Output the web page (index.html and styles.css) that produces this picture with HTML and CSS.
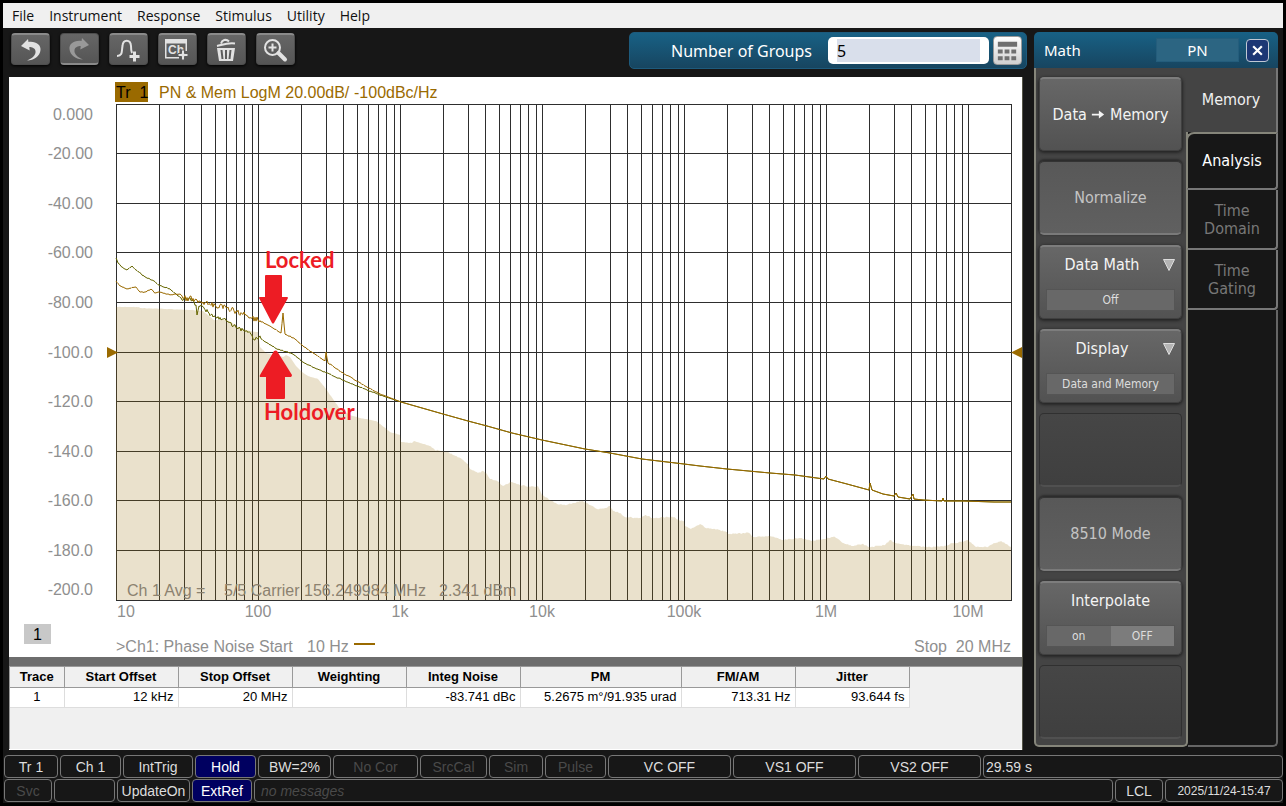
FILE: index.html
```
<!DOCTYPE html>
<html lang="en">
<head>
  <meta charset="UTF-8" />
  <meta name="viewport" content="width=device-width, initial-scale=1.0" />
  <title>Phase Noise</title>
  <link rel="stylesheet" href="styles.css">
</head>
<body>

  <div class="app">
    <nav class="menu-bar">
      <button>File</button>
      <button>Instrument</button>
      <button>Response</button>
      <button>Stimulus</button>
      <button>Utility</button>
      <button>Help</button>
    </nav>

    <div class="workspace">
      <main class="left">
        <div class="top-row">
          <div class="toolbar">
            <button class="tool" aria-label="Undo">
              <svg viewBox="0 0 39 32"><path d="M10 12 L17 5 L17.5 8 C25 7 30 11 29.5 16 C29 22 23 26.5 16 26.5 C22 24 25 21 24.5 17 C24 14 21 13 18.3 13 L18.7 16.5 Z" /></svg>
            </button>
            <button class="tool pressed" aria-label="Redo">
              <svg viewBox="0 0 39 32"><path d="M29 12 L22 5 L21.5 8 C14 7 9 11 9.5 16 C10 22 16 26.5 23 26.5 C17 24 14 21 14.5 17 C15 14 18 13 20.7 13 L20.3 16.5 Z" /></svg>
            </button>
            <button class="tool" aria-label="Add trace">
              <svg viewBox="0 0 39 32">
                <path class="line" d="M8 22 C14 22 12.5 17 13.500 12 C14 5 21.5 5 22 12 C22 15 22 17 23 19" />
                <path d="M24 17.500 h3 v3.500 h3.500 v3 h-3.500 v3.500 h-3 v-3.500 h-3.500 v-3 h3.500 z" />
              </svg>
            </button>
            <button class="tool" aria-label="Add channel">
              <svg viewBox="0 0 39 32">
                <path d="M7 5 h22 v12 h-1.500 v-7.500 h-19 v13.500 h12.500 v1.500 h-14 z" />
                <text class="ch-text" x="10" y="20">Ch</text>
                <path class="outlined" d="M23.500 16 h3 v3.500 h3.500 v3 h-3.500 v3.500 h-3 v-3.500 h-3.500 v-3 h3.500 z" />
              </svg>
            </button>
            <button class="tool" aria-label="Delete">
              <svg viewBox="0 0 39 32">
                <path d="M10 14 h18 l-2 13 h-14 z" />
                <path class="cut" d="M14.500 16 l1 9 M19 16 v9 M23.500 16 l-1 9" />
                <path class="line" d="M10 12 C15 11 20 8.500 28 9.500 M14 9.500 C15 6 19 4.500 22 7.500" />
              </svg>
            </button>
            <button class="tool" aria-label="Zoom">
              <svg viewBox="0 0 39 32">
                <circle class="line" cx="16.500" cy="13.500" r="7.500" />
                <path class="line" d="M16.500 9.500 v8 M12.500 13.500 h8" />
                <path class="handle" d="M22.500 19 L29 25.500" />
              </svg>
            </button>
          </div>

          <div class="entry-bar">
            <label for="groups">Number of Groups</label>
            <input type="text" id="groups" value="5">
            <button class="keypad" aria-label="Keypad">
              <svg viewBox="0 0 28 29">
                <path d="M4 5 h20 v5 h-20 z M4 13 h5 v4 h-5 z M11 13 h5 v4 h-5 z M18 13 h5 v4 h-5 z M4 20 h5 v4 h-5 z M11 20 h5 v4 h-5 z M18 20 h5 v4 h-5 z" />
              </svg>
            </button>
          </div>
        </div>

        <div class="screen">
          <svg class="chart" viewBox="0 0 1013 580">
            <rect x="106" y="5" width="33" height="20" fill="#9a6a00" />
            <text x="107" y="21" class="on-trace">Tr&#160; 1</text>
            <text x="150" y="21" class="trace-label">PN &amp; Mem LogM 20.00dB/</text>
            <text x="345" y="21" class="trace-label">-100dBc/Hz</text>

            <g id="grid"></g>
            <path id="shade" />
            <path id="memory-trace" />
            <path id="data-trace" />
            <path class="marker" d="M98 270 L109 275.500 L98 281 Z M1013 270 L1002 275.500 L1013 281 Z" />

            <g id="y-labels"></g>
            <g id="x-labels"></g>
            <g class="carrier">
              <text x="118" y="519">Ch 1 Avg =</text>
              <text x="215" y="519">5/5 Carrier 156.249984 MHz</text>
              <text x="430" y="519">2.341 dBm</text>
            </g>

            <rect x="15" y="547" width="27" height="20" fill="#c8c8c8" />
            <text x="24" y="563" class="channel">1</text>
            <text x="107" y="575">&gt;Ch1: Phase Noise</text>
            <text x="250" y="575">Start</text>
            <text x="298" y="575">10 Hz</text>
            <rect x="345" y="566" width="21" height="2" fill="#9a6a00" />
            <text x="1002" y="575" text-anchor="end">Stop&#160; 20 MHz</text>

            <g class="note">
              <text x="256" y="191">Locked</text>
              <path d="M256 199 q0 -1 1 -1 h15 q1 0 1 1 v21 h5 q1 0 1 1 l-14 25 q-1 1 -2 0 l-13 -25 q0 -1 1 -1 h5 z" />
              <path d="M257 321 q0 1 1 1 h17 q1 0 1 -1 v-21 h6 q1 -1 1 -2 l-15 -24 q-1 -1 -3 0 l-14 24 q-1 2 1 2 h5 z" />
              <text x="255" y="343">Holdover</text>
            </g>
          </svg>

          <div class="results">
            <table>
              <thead>
                <tr>
                  <th class="narrow">Trace</th>
                  <th>Start Offset</th>
                  <th>Stop Offset</th>
                  <th>Weighting</th>
                  <th>Integ Noise</th>
                  <th class="wide">PM</th>
                  <th>FM/AM</th>
                  <th>Jitter</th>
                </tr>
              </thead>
              <tbody>
                <tr>
                  <td class="center">1</td>
                  <td>12 kHz</td>
                  <td>20 MHz</td>
                  <td></td>
                  <td>-83.741 dBc</td>
                  <td>5.2675 m°/91.935 urad</td>
                  <td>713.31 Hz</td>
                  <td>93.644 fs</td>
                </tr>
              </tbody>
            </table>
          </div>
        </div>
      </main>

      <aside class="side">
        <div class="side-title">
          <h2>Math</h2>
          <button class="mode">PN</button>
          <button class="close" aria-label="Close">
            <svg viewBox="0 0 12 12"><path d="M2 2 L10 10 M10 2 L2 10" /></svg>
          </button>
        </div>
        <div class="side-body">
          <div class="softkeys">
            <button class="key">
              <span class="key-label">Data
                <svg class="arrow" viewBox="0 0 16 12"><path d="M1 5 H9 V1.500 L15 6 L9 10.500 V7 H1 Z" /></svg>
                Memory</span>
            </button>
            <button class="key off">Normalize</button>
            <button class="key picker">
              <span class="key-label">Data Math</span>
              <svg class="drop" viewBox="0 0 12 12"><path d="M0.500 0.500 H11.500 L6 11.500 Z" /></svg>
              <span class="value">Off</span>
            </button>
            <button class="key picker">
              <span class="key-label">Display</span>
              <svg class="drop" viewBox="0 0 12 12"><path d="M0.500 0.500 H11.500 L6 11.500 Z" /></svg>
              <span class="value">Data and Memory</span>
            </button>
            <div class="key blank"></div>
            <button class="key off">8510 Mode</button>
            <button class="key picker toggle">
              <span class="key-label">Interpolate</span>
              <span class="value"><span>on</span><span class="active">OFF</span></span>
            </button>
            <div class="key blank"></div>
          </div>
          <div class="tabs">
            <button class="tab selected">Memory</button>
            <button class="tab first">Analysis</button>
            <button class="tab dim">Time<br>Domain</button>
            <button class="tab dim">Time<br>Gating</button>
            <div class="tab-rest"></div>
          </div>
        </div>
      </aside>
    </div>

    <footer class="status">
      <div class="status-row upper">
        <button>Tr 1</button>
        <button>Ch 1</button>
        <button>IntTrig</button>
        <button class="lit">Hold</button>
        <button>BW=2%</button>
        <button class="dim">No Cor</button>
        <button class="dim">SrcCal</button>
        <button class="dim">Sim</button>
        <button class="dim">Pulse</button>
        <button>VC OFF</button>
        <button>VS1 OFF</button>
        <button>VS2 OFF</button>
        <span class="sweep">29.59 s</span>
      </div>
      <div class="status-row lower">
        <button class="dim">Svc</button>
        <span></span>
        <button>UpdateOn</button>
        <button class="lit">ExtRef</button>
        <span class="message">no messages</span>
        <button>LCL</button>
        <span class="clock">2025/11/24-15:47</span>
      </div>
    </footer>
  </div>

  <script src="chart.js"></script>
</body>
</html>
```
FILE: styles.css
```
* {
  box-sizing: border-box;
}

body {
  margin: 0;
  background-color: #000;
  font-family: "Noto Sans", "Open Sans", sans-serif;
}

button {
  margin: 0;
  padding: 0;
  border: none;
  background: none;
  font-family: inherit;
  cursor: pointer;
}

.app {
  display: flex;
  flex-direction: column;
  min-height: 100vh;
  border: 3px solid #000;
  background-color: #171717;
}

.menu-bar {
  display: flex;
  gap: 15px;
  padding: 0 9px;
  background-color: #f0f0f0;
}

.menu-bar button {
  height: 25px;
  font-family: "Open Sans", sans-serif;
  font-size: 14px;
  color: #111;
}

.workspace {
  flex: 1;
  display: flex;
  gap: 7px;
  padding: 4px 5px 5px 6px;
}

.left {
  flex: 1;
  min-width: 0;
  display: flex;
  flex-direction: column;
  gap: 8px;
}

.top-row {
  display: flex;
  justify-content: space-between;
  align-items: flex-start;
}

.toolbar {
  display: flex;
  gap: 10px;
  padding: 1px 0 0 2px;
}

.tool {
  width: 39px;
  height: 32px;
  border: 1px solid #4e4e4e;
  border-top: 2px solid #8a8a8a;
  border-radius: 4px;
  background: linear-gradient(#666, #555);
  box-shadow: 0 1px 3px #000;
}

.tool svg {
  display: block;
  width: 39px;
  height: 32px;
  margin: -2px -1px;
  fill: #e2e2e2;
}

.tool.pressed {
  border-top: 1px solid #4e4e4e;
  border-bottom: 2px solid #8a8a8a;
}

.tool.pressed svg {
  fill: #999;
}

.tool .line {
  fill: none;
  stroke: #e2e2e2;
  stroke-width: 2;
}

.tool .cut {
  stroke: #5c5c5c;
  stroke-width: 2;
}

.tool .handle {
  stroke: #e2e2e2;
  stroke-width: 4;
  stroke-linecap: round;
}

.tool .outlined {
  stroke: #5c5c5c;
  stroke-width: 1;
}

.ch-text {
  font: bold 12px "Liberation Sans", sans-serif;
}

.entry-bar {
  display: flex;
  align-items: center;
  gap: 4px;
  height: 37px;
  padding: 0 4px 0 41px;
  border: 1px solid #1d5a7c;
  border-radius: 5px;
  background: linear-gradient(#186185, #174560);
}

.entry-bar label {
  margin-right: 12px;
  font-size: 16px;
  color: #fff;
}

.entry-bar input {
  width: 161px;
  height: 27px;
  padding: 2px 9px;
  border: none;
  border-radius: 5px;
  background: linear-gradient(#d9dfeb, #d9dfeb) content-box, #fff;
  font-family: inherit;
  font-size: 16px;
  color: #000;
}

.keypad {
  width: 29px;
  height: 29px;
  border: 1px solid #999;
  border-radius: 4px;
  background: linear-gradient(#fff, #d0d0d0);
}

.keypad svg {
  display: block;
  fill: #707070;
}

/* screen with the chart and the result table */
.screen {
  flex: 1;
  display: flex;
  flex-direction: column;
  margin-right: 4px;
  border-right: 1px solid #555548;
  background-color: #fff;
}

.chart {
  display: block;
  width: 100%;
  font-family: "Liberation Sans", sans-serif;
  font-size: 16px;
  fill: #8f8f8f;
}

.chart .grid-line {
  stroke: #2e2e2e;
  stroke-width: 1;
  shape-rendering: crispEdges;
}

.chart .trace-label {
  fill: #9a6a00;
}

.chart .on-trace,
.chart .channel {
  fill: #000;
}

.chart .carrier {
  fill: #8c8270;
}

.chart .marker {
  fill: #9a6a00;
}

#shade {
  fill: #9a7110;
  opacity: 0.21;
}

#data-trace,
#memory-trace {
  fill: none;
  stroke: #9a6a00;
  stroke-width: 1;
}

#memory-trace {
  stroke: #666600;
}

.note {
  font-family: Lato, sans-serif;
  font-size: 22px;
  font-weight: bold;
  fill: #ed1c24;
}

.results {
  flex: 1;
  padding: 1px;
  border-top: 9px solid #6d6d6d;
  border-bottom: 1px solid #fff;
  background-color: #f0f0f0;
  box-shadow: inset 1px 1px 0 #999;
}

.results table {
  border-collapse: collapse;
  table-layout: fixed;
  width: 899px;
  font-family: "Liberation Sans", sans-serif;
  font-size: 13px;
  color: #000;
}

.results th,
.results td {
  height: 20px;
  padding: 0 4px;
  line-height: 18px;
}

.results th {
  width: 114px;
  border-right: 1px solid #999;
  border-bottom: 1px solid #999;
}

.results th.narrow {
  width: 54px;
}

.results th.wide {
  width: 161px;
}

.results td {
  border-right: 1px solid #ddd;
  border-bottom: 1px solid #ddd;
  background-color: #fff;
  text-align: right;
}

.results td.center {
  text-align: center;
}

/* side panel */
.side {
  display: flex;
  flex-direction: column;
  width: 244px;
  margin-bottom: 3px;
}

.side-title {
  display: flex;
  align-items: center;
  gap: 7px;
  height: 36px;
  padding: 0 9px 0 10px;
  border-radius: 5px 5px 0 0;
  background: linear-gradient(#186185, #174560);
  color: #fff;
}

.side-title h2 {
  flex: 1;
  margin: 0;
  font-size: 15px;
  font-weight: normal;
}

.mode {
  width: 83px;
  height: 24px;
  border: 1px solid #245d7c;
  background-color: #2c6582;
  font-size: 15px;
  color: #fff;
}

.close {
  width: 23px;
  height: 23px;
  border: 1px solid #c0c8d4;
  border-radius: 4px;
  background-color: #1c3775;
}

.close svg {
  display: block;
  width: 13px;
  height: 13px;
  margin: auto;
  stroke: #fff;
  stroke-width: 2;
}

.side-body {
  flex: 1;
  display: flex;
  font-family: "DejaVu Sans Condensed", "Noto Sans", sans-serif;
}

.softkeys {
  display: flex;
  flex-direction: column;
  gap: 10px;
  width: 154px;
  padding: 9px 4px 6px 3px;
  border: solid #85857a;
  border-width: 0 2px 2px 2px;
  border-radius: 0 0 5px 5px;
  background-color: #444;
}

.key {
  height: 74px;
  border: 1px solid #404040;
  border-top: 2px solid #7d7d7d;
  border-radius: 5px;
  background: linear-gradient(#676767, #525252);
  box-shadow: 0 1px 3px 1px #262626;
  font-size: 16px;
  color: #f4f4f4;
}

.key.off {
  border-top: 1px solid #333;
  border-bottom: 2px solid #7a7a7a;
  background: linear-gradient(#585858, #606060);
  box-shadow: 0 -1px 2px 1px #2c2c2c;
  color: #c4c4c4;
}

.key.blank {
  border: 1px solid #303030;
  border-bottom: 2px solid #505050;
  background: linear-gradient(#464646, #3f3f3f);
  box-shadow: none;
}

.arrow {
  width: 14px;
  height: 11px;
  fill: #f4f4f4;
}

.picker {
  display: grid;
  grid-template-columns: 1fr 12px;
  align-content: space-between;
  align-items: center;
  padding: 8px 6px 7px;
}

.picker .key-label {
  padding-right: 5px;
}

.picker.toggle .key-label {
  grid-column: 1 / 3;
  padding: 0;
}

.drop {
  width: 12px;
  height: 12px;
  fill: #b4b4b4;
  stroke: #ddd;
}

.value {
  grid-column: 1 / 3;
  display: flex;
  height: 22px;
  border: 1px solid #555;
  background-color: #686868;
  font-size: 12px;
  line-height: 20px;
  color: #ddd;
  justify-content: center;
}

.value span {
  flex: 1;
}

.value .active {
  background-color: #7c7c7c;
}

.tabs {
  flex: 1;
  display: flex;
  flex-direction: column;
}

.tab {
  height: 60px;
  border: solid #777;
  border-width: 0 2px 2px 0;
  border-radius: 0 0 4px 0;
  font-size: 16px;
  line-height: 18px;
  color: #fff;
}

.tab.selected {
  height: 64px;
  margin-left: -2px;
  border-bottom: none;
  border-radius: 0;
  background-color: #444;
  color: #f0f0f0;
}

.tab.first {
  height: 58px;
  margin-left: -2px;
  border-top: 2px solid #85857a;
  border-left: 2px solid #85857a;
  border-radius: 8px 0 4px 0;
  background-color: #171717;
}

.tab.dim {
  padding-top: 2px;
  color: #777;
}

.tab-rest {
  flex: 1;
  border: solid #666;
  border-width: 0 2px 2px 0;
  border-radius: 0 0 5px 0;
}

/* status bar */
.status {
  display: flex;
  flex-direction: column;
  gap: 1px;
  padding: 0 0 1px 1px;
}

.status-row {
  display: grid;
  gap: 2px;
}

.status-row.upper {
  grid-template-columns: 54px 61px 70px 61px 73px 85px 67px 54px 61px 123px 123px 123px 1fr;
}

.status-row.lower {
  grid-template-columns: 48px 61px 73px 60px 1fr 48px 118px;
}

.status-row button,
.status-row span {
  height: 23px;
  border: 1px solid #777;
  border-radius: 4px;
  font-family: "Liberation Sans", sans-serif;
  font-size: 14px;
  line-height: 22px;
  color: #ddd;
}

.status-row .lit {
  background-color: #000060;
  color: #fff;
}

.status-row .dim,
.status-row .message {
  color: #4a4a4a;
}

.status-row .sweep {
  padding-left: 2px;
}

.status-row .message {
  padding-left: 6px;
  font-style: italic;
}

.status-row .clock {
  font-size: 12px;
  text-align: center;
}
```
FILE: chart.js
```
const svgNS = "http://www.w3.org/2000/svg";
const plot = { left: 107, right: 1002, top: 27, bottom: 523, decade: 142 };

function add(parent, tag, attrs, text) {
  const el = document.createElementNS(svgNS, tag);
  for (const key in attrs) el.setAttribute(key, attrs[key]);
  if (text) el.textContent = text;
  document.getElementById(parent).appendChild(el);
}

function gridLine(x1, y1, x2, y2) {
  add("grid", "line", { class: "grid-line", x1, y1, x2, y2 });
}

function drawGrid() {
  for (let d = 0; d < 7; d++) {
    for (let n = 1; n < 10; n++) {
      const x = Math.round(plot.left + plot.decade * (d + Math.log10(n))) + 0.5;
      if (x <= plot.right + 1) gridLine(x, plot.top, x, plot.bottom);
    }
  }
  const step = (plot.bottom - plot.top) / 10;
  for (let i = 0; i <= 10; i++) {
    const y = Math.floor(plot.top + i * step) + 0.5;
    gridLine(plot.left, y, plot.right + 1, y);

    let labelY = y + 5;
    if (i === 0) labelY += 10;
    if (i === 10) labelY -= 11;
    const value = i === 0 ? "0.000" : i < 5 ? (-20 * i).toFixed(2) : (-20 * i).toFixed(1);
    add("y-labels", "text", { x: 84, y: labelY, "text-anchor": "end" }, value);
  }
  ["10", "100", "1k", "10k", "100k", "1M", "10M"].forEach((label, i) => {
    const x = i === 0 ? plot.left + 10 : plot.left + i * plot.decade;
    add("x-labels", "text", { x, y: 540, "text-anchor": "middle" }, label);
  });
}

// part of both traces above 1 kHz
const tail = [
  [392,325],[434,337],[459,344],[478,349],[503,356],[533,363],[576,372],[601,376],
  [633,382],[675,387],[691,389],[718,392],[761,396],[786,398],[815,402],[817,399],[819,402],
  [838,407],[860,413],[861,406],[863,413],[874,417],[885,419],[887,416],[889,420],[901,422],
  [904,417],[905,422],[914,423],[933,424],[934,421],[935,424],[954,424],[985,425],[1002,425]
];

const dataPoints = [
  [107,204],[111,209],[118,212],[127,210],[131,215],[137,215],[142,212],[146,216],
  [150,215],[161,218],[171,217],[175,221],[188,223],[194,225],[206,228],[218,231],
  [228,235],[238,239],[249,243],[264,251],[272,256],[274,236],[276,257],[286,262],
  [294,269],[304,276],[316,284],[317,275],[319,286],[334,296],[346,303],[358,310],[374,318]
];

const memoryPoints = [
  [107,181],[109,186],[113,190],[118,193],[123,189],[127,193],[136,200],[143,203],
  [150,208],[161,212],[169,219],[175,222],[184,223],[187,228],[188,238],[190,229],
  [195,231],[204,240],[218,244],[228,251],[238,254],[246,263],[250,260],[258,266],
  [268,272],[284,277],[294,285],[306,291],[318,296],[338,305],[358,313],[374,319]
];

const shadePoints = [
  [107,230],[130,230],[131,231],[184,233],[194,234],[199,238],[205,243],[218,243],
  [231,251],[241,254],[249,255],[251,270],[257,276],[274,280],[277,278],[281,280],
  [287,289],[293,295],[299,299],[309,302],[317,312],[324,322],[331,332],[341,338],
  [351,341],[367,344],[375,350],[381,355],[391,358],[392,365],[403,366],[405,364],
  [421,369],[426,373],[438,375],[451,381],[459,387],[461,392],[469,396],[474,394],
  [477,396],[481,402],[488,404],[494,409],[502,405],[509,407],[519,410],[529,409],
  [533,418],[541,423],[548,427],[556,428],[564,426],[574,424],[581,428],[588,432],
  [596,431],[601,429],[604,434],[611,436],[616,440],[631,441],[636,438],[643,441],
  [665,440],[671,444],[675,444],[676,449],[682,452],[691,447],[697,451],[706,452],
  [718,455],[719,457],[740,456],[744,460],[761,459],[774,463],[791,461],[803,464],
  [814,462],[826,460],[834,466],[844,469],[853,467],[861,470],[876,468],[881,463],
  [886,466],[903,469],[921,470],[938,469],[943,466],[954,465],[959,463],[967,470],
  [979,470],[985,466],[992,464],[1002,470]
];

// repeatable value between -1 and 1
function jitter(x, seed) {
  const v = Math.sin(x * 127.1 + seed * 311.7) * 43758.5453;
  return (v - Math.floor(v)) * 2 - 1;
}

// adds the measurement noise between two samples
function roughen(points, seed, from, to, amount, rest) {
  const out = [];
  points.forEach((p, i) => {
    out.push(p);
    const next = points[i + 1];
    if (!next) return;
    for (let x = p[0] + 1; x < next[0]; x++) {
      const t = (x - p[0]) / (next[0] - p[0]);
      const size = x > from && x < to ? amount : rest;
      out.push([x, p[1] + (next[1] - p[1]) * t + jitter(x, seed) * size]);
    }
  });
  return out;
}

function toPath(points) {
  return "M" + points.map(p => p[0] + " " + p[1].toFixed(1)).join(" L");
}

drawGrid();
document.getElementById("data-trace")
  .setAttribute("d", toPath(roughen(dataPoints, 1, 172, 252, 3, 0.5).concat(tail)));
document.getElementById("memory-trace")
  .setAttribute("d", toPath(roughen(memoryPoints, 3, 172, 252, 2, 0.5).concat(tail)));
document.getElementById("shade")
  .setAttribute("d", toPath(roughen(shadePoints, 2, 420, 1002, 0.6, 0.2)) + " L1002 523 L107 523 Z");
```
